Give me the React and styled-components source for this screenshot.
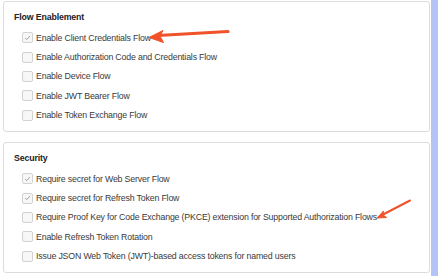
import React from 'react';
import styled, { createGlobalStyle } from 'styled-components';

const GlobalStyle = createGlobalStyle`
  html, body {
    margin: 0;
    padding: 0;
    background: #ffffff;
  }
  body {
    font-family: "Liberation Sans", Arial, sans-serif;
    color: #333;
  }
`;

const Page = styled.div`
  position: relative;
  display: flex;
  width: 438px;
  height: 276px;
  overflow: hidden;
  background: #fff;
`;

const Content = styled.div`
  flex: 1;
  min-width: 0;
  display: flex;
  flex-direction: column;
  gap: 10px;
  padding: 1px 1px 0 3px;
`;

const ScrollStrip = styled.div`
  flex: none;
  width: 7px;
  background: #b5c4f7;
`;

const Panel = styled.section`
  border: 1px solid #dcdcdc;
  border-radius: 3px;
  background: #fff;
  padding: 8px 10px 6px 10px;
  overflow: hidden;
`;

const Heading = styled.h3`
  margin: 0 0 4px 0;
  font-size: 8.8px;
  line-height: 14px;
  font-weight: 700;
  letter-spacing: -0.15px;
  color: #222;
`;

const Row = styled.label`
  display: flex;
  align-items: center;
  height: 19.4px;
  padding-left: 8px;
  font-size: 8.8px;
  letter-spacing: -0.18px;
  color: #3a3a3a;
  white-space: nowrap;
`;

const Box = styled.span`
  flex: none;
  box-sizing: border-box;
  width: 11px;
  height: 11px;
  margin-right: 3px;
  border: 1px solid #d2d2d2;
  border-radius: 2px;
  background: #f7f7f7;
  display: flex;
  align-items: center;
  justify-content: center;
`;

const Arrows = styled.svg`
  position: absolute;
  left: 0;
  top: 0;
  pointer-events: none;
`;

const Check = () => (
  <svg width="7" height="6" viewBox="0 0 7 6">
    <path d="M1.2 3.2 L2.8 4.6 L5.8 1.2" fill="none" stroke="#a0a0a0" strokeWidth="1" />
  </svg>
);

const Option = ({ checked, children }) => (
  <Row>
    <Box>{checked && <Check />}</Box>
    {children}
  </Row>
);

const flows = [
  ['Enable Client Credentials Flow', true],
  ['Enable Authorization Code and Credentials Flow', false],
  ['Enable Device Flow', false],
  ['Enable JWT Bearer Flow', false],
  ['Enable Token Exchange Flow', false],
];

const security = [
  ['Require secret for Web Server Flow', true],
  ['Require secret for Refresh Token Flow', true],
  ['Require Proof Key for Code Exchange (PKCE) extension for Supported Authorization Flows', false],
  ['Enable Refresh Token Rotation', false],
  ['Issue JSON Web Token (JWT)-based access tokens for named users', false],
];

export default function App() {
  return (
    <Page>
      <GlobalStyle />
      <Content>
        <Panel>
          <Heading>Flow Enablement</Heading>
          {flows.map(([label, checked]) => (
            <Option key={label} checked={checked}>{label}</Option>
          ))}
        </Panel>
        <Panel>
          <Heading>Security</Heading>
          {security.map(([label, checked]) => (
            <Option key={label} checked={checked}>{label}</Option>
          ))}
        </Panel>
      </Content>
      <ScrollStrip />
      <Arrows width="438" height="276" viewBox="0 0 438 276">
        <path d="M228 31.5 L158 35.5" stroke="#f0532a" strokeWidth="3.2" strokeLinecap="round" fill="none" />
        <path d="M149 37.5 L163 30.5 L160 36 L163.5 42.5 Z" fill="#f0532a" stroke="#f0532a" strokeWidth="1" strokeLinejoin="round" />
        <path d="M410 200.5 L383 214.5" stroke="#f0532a" strokeWidth="2" strokeLinecap="round" fill="none" />
        <path d="M377 218 L383.5 211 L383 214.8 L386.5 217.5 Z" fill="#f0532a" stroke="#f0532a" strokeWidth="1" strokeLinejoin="round" />
      </Arrows>
    </Page>
  );
}
